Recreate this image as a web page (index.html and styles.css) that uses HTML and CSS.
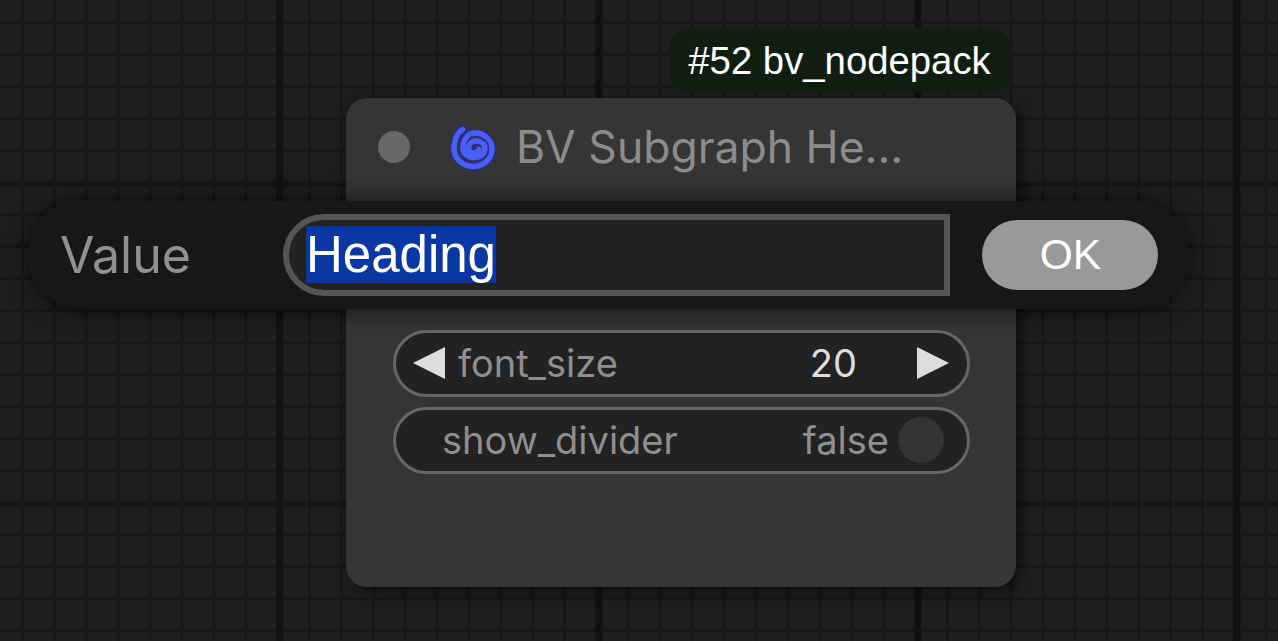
FILE: index.html
```html
<!DOCTYPE html>
<html lang="en">
<head>
<meta charset="utf-8">
<title>BV Subgraph Heading</title>
<link rel="stylesheet" href="styles.css">
</head>
<body>
<main class="canvas">
  <div class="badge"><span class="badge-text">#52 bv_nodepack</span></div>
  <section class="node">
    <header class="node-title">
      <span class="dot"></span>
      <svg class="spiral" viewBox="440 115 64 60" aria-hidden="true">
        <path class="spiral-under" d="M462.500 127.500C457 131 454 139 454 147C454 156.500 463 164.500 473 164.500C484 164.500 492 156.500 492 147C492 138 484 131 475 131C467.500 131 463 138 463 146C463 151.500 468 155.500 474 155.500C480.500 155.500 485 151.500 485 146.500C485 142 481 139 476 139C471.500 139 468.500 142.500 468.500 146.500C468.500 149.500 471 151 474 151C476.500 151 478.500 149.500 479 147.500"/>
        <path class="spiral-line" d="M462.500 127.500C457 131 454 139 454 147C454 156.500 463 164.500 473 164.500C484 164.500 492 156.500 492 147C492 138 484 131 475 131C467.500 131 463 138 463 146C463 151.500 468 155.500 474 155.500C480.500 155.500 485 151.500 485 146.500C485 142 481 139 476 139C471.500 139 468.500 142.500 468.500 146.500C468.500 149.500 471 151 474 151C476.500 151 478.500 149.500 479 147.500"/>
      </svg>
      <span class="title-text">BV Subgraph He...</span>
    </header>
    <div class="widgets">
      <div class="widget number">
        <svg class="arrow" viewBox="0 0 32 32" aria-hidden="true"><polygon points="0,16 32,0 32,32"/></svg>
        <span class="label">font_size</span>
        <span class="value">20</span>
        <svg class="arrow" viewBox="0 0 32 32" aria-hidden="true"><polygon points="32,16 0,0 0,32"/></svg>
      </div>
      <div class="widget toggle">
        <span class="label">show_divider</span>
        <span class="state">false</span>
        <span class="knob"></span>
      </div>
    </div>
  </section>
  <div class="prompt">
    <span class="prompt-name">Value</span>
    <div class="prompt-input"><span class="selected">Heading</span></div>
    <button class="prompt-ok" type="button">OK</button>
  </div>
</main>
</body>
</html>
```
FILE: styles.css
```css
* { box-sizing: border-box; }
html, body { margin: 0; height: 100%; overflow: hidden; }
body { background: #1e1e1e; font-family: Inter, "Liberation Sans", sans-serif; }

.canvas {
  position: relative;
  width: 1278px;
  height: 641px;
  overflow: hidden;
  background-color: #1e1e1e;
  background-image:
    linear-gradient(90deg, #111 0 7px, transparent 7px),
    linear-gradient(#151515 0 6px, transparent 6px),
    linear-gradient(90deg, #171717 0 3px, transparent 3px),
    linear-gradient(#171717 0 3px, transparent 3px);
  background-size: 319px 100%, 100% 320px, 31.9px 100%, 100% 32px;
  background-position: 276.5px 0, 0 181px, 21px 0, 0 21px;
}

.badge {
  position: absolute;
  left: 670px;
  top: 29px;
  width: 340px;
  height: 63px;
  display: flex;
  align-items: center;
  justify-content: center;
  padding-right: 1px;
  background: #0f1e10;
  border-radius: 16px;
  color: #fff;
  font: 38.3px "Liberation Sans", Arial, sans-serif;
}

.node {
  position: absolute;
  left: 346px;
  top: 98px;
  width: 670px;
  height: 489px;
  background: #353535;
  border-radius: 21px;
  box-shadow: 4px 4px 14px rgba(0, 0, 0, .55);
  display: flex;
  flex-direction: column;
}

.node-title {
  display: flex;
  align-items: center;
  height: 98px;
  padding-left: 32px;
}

.dot {
  width: 32px;
  height: 32px;
  border-radius: 50%;
  background: #686868;
  flex: none;
}

.spiral {
  width: 64px;
  height: 60px;
  margin-left: 30px;
  flex: none;
  fill: none;
  stroke-linecap: round;
}
.spiral-under { stroke: #2a2f7e; stroke-width: 8.4; }
.spiral-line { stroke: #4b5ff8; stroke-width: 5.4; }

.title-text {
  margin-left: 12px;
  color: #8c8c8c;
  font-size: 44.5px;
  white-space: nowrap;
}

.widgets {
  display: flex;
  flex-direction: column;
  gap: 10px;
  margin: 134px 46px 0 47px;
}

.widget {
  display: flex;
  align-items: center;
  height: 67px;
  padding-bottom: 2px;
  background: #222;
  border: 3px solid #666;
  border-radius: 34px;
  font-size: 38px;
  color: #8f8f8f;
}

.number { padding-left: 17px; padding-right: 18px; }
.arrow { width: 32px; height: 32px; flex: none; fill: #ddd; }
.number .label { margin-left: 13px; flex: 1; }
.number .value { color: #ddd; margin-right: 60px; }

.toggle { padding-left: 46px; padding-right: 23px; }
.toggle .label { flex: 1; }
.knob {
  width: 46px;
  height: 46px;
  margin-left: 9px;
  border-radius: 50%;
  background: #333;
  flex: none;
}

.prompt {
  position: absolute;
  left: 28px;
  top: 201px;
  width: 1161px;
  height: 108px;
  display: flex;
  align-items: center;
  padding: 0 31px 0 32px;
  background: #171717;
  border-radius: 54px;
  box-shadow: 0 0 24px rgba(0, 0, 0, .7);
}

.prompt-name {
  width: 223px;
  flex: none;
  color: #919191;
  font-size: 50px;
}

.prompt-input {
  width: 667px;
  height: 82px;
  flex: none;
  display: flex;
  align-items: center;
  padding-left: 17px;
  padding-bottom: 2px;
  background: #222;
  border: 6px solid #555;
  border-radius: 41px 0 0 41px;
}

.selected {
  background: #0a37a3;
  color: #fff;
  font: 51px/57px "Liberation Sans", Arial, sans-serif;
}

.prompt-ok {
  width: 176px;
  height: 70px;
  margin-left: 32px;
  flex: none;
  padding: 0 0 0 1px;
  border: 0;
  border-radius: 35px;
  background: #999;
  color: #fff;
  font: 42.5px "Liberation Sans", Arial, sans-serif;
}
```
